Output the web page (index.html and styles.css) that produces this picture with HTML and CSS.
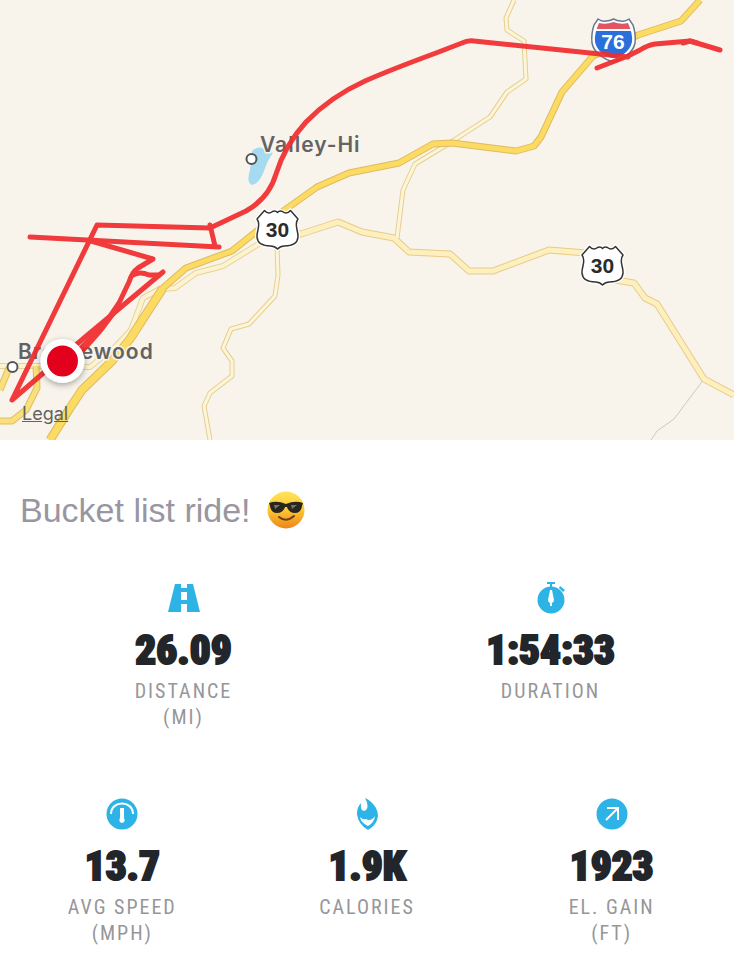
FILE: index.html
```html
<!DOCTYPE html>
<html lang="en">
  <head>
    <meta charset="UTF-8" />
    <meta name="viewport" content="width=device-width, initial-scale=1.0" />
    <title>Bucket list ride!</title>
    <link rel="stylesheet" href="styles.css">
  </head>

  <body>
    <main class="workout">
      <div class="map">
        <svg class="map-canvas" viewBox="0 0 734 440" role="img" aria-label="Route map">
          <defs>
            <!-- US route shield, centred on 0,0 -->
            <g id="us-shield">
              <path d="M-13-19.500Q-9-15-5-18.500Q-2-20 0-17.500Q2-20 5-18.500Q9-15 13-19.500L20.500-11C16-5 21 0 20.500 7C20 14 13 16 7 16Q3 16 0 19Q-3 16-7 16C-13 16-20 14-20.500 7C-21 0-16-5-20.500-11Z" fill="#fff" stroke="#fff" stroke-width="4" />
              <path d="M-13-19.500Q-9-15-5-18.500Q-2-20 0-17.500Q2-20 5-18.500Q9-15 13-19.500L20.500-11C16-5 21 0 20.500 7C20 14 13 16 7 16Q3 16 0 19Q-3 16-7 16C-13 16-20 14-20.500 7C-21 0-16-5-20.500-11Z" fill="#fff" stroke="#333" stroke-width="1.500" stroke-linejoin="round" />
            </g>
            <path id="hwy" d="M50 440L70 408L82 390L113 360L130 339L163 288L186 268L232 251L272 219L317 187L349 173L399 163L433 144L452 143L516 151L534 146L541 137L562 92L593 56L638 35L681 21L700 0" />
            <path id="us30" d="M278 232L301 234L338 222L362 232L394 238L409 252L450 254L469 271L493 271L549 250L586 253L615 280L634 283L645 298L657 304L704 379L734 395" />
            <path id="ramp" d="M0 366L36 366L90 367L116 346L131 330L143 298L160 289L175 288L196 273L223 266L257 245L278 232" />
            <path id="spur" d="M514 0L506 18L507 30L524 41L526 79L507 92L490 117L448 144L415 164L403 190L397 238" />
            <path id="south" d="M277 245L278 275L275 296L249 324L231 329L223 348L232 361L232 376L210 393L204 406L210 440" />
            <path id="loop" d="M9 368L0 390M36 366L37 388L26 410L12 421L0 421" />
            <clipPath id="i-shield-clip"><path d="M599 23Q606 25 613.500 22Q621 25 628 23Q633 34 632 42C630 52 620 57 613.500 58C607 57 597 52 595 42Q594 34 599 23Z" /></clipPath>
            <filter id="pin-shadow" x="-50%" y="-50%" width="200%" height="200%">
              <feDropShadow dx="0" dy="2" stdDeviation="3" flood-opacity="0.35" />
            </filter>
          </defs>

          <rect width="734" height="440" fill="#f8f4ec" />

          <path d="M252 151Q260 144 266 151L273 153Q268 159 264 171Q259 184 252 185Q246 182 250 170Z" fill="#a5daf0" />

          <!-- roads: casing first, then fill -->
          <g class="road">
            <path d="M704 379L674 419L657 431L651 440" stroke="#ccc9c2" stroke-width="1" />
            <use href="#south" stroke="#e5ce91" stroke-width="5" />
            <use href="#spur" stroke="#e5ce91" stroke-width="5" />
            <use href="#ramp" stroke="#e7d299" stroke-width="6" />
            <use href="#us30" stroke="#e8ca8b" stroke-width="7" />
            <use href="#south" stroke="#fdf5d8" stroke-width="3" />
            <use href="#spur" stroke="#fdf5d8" stroke-width="3" />
            <use href="#ramp" stroke="#fdf4cf" stroke-width="4" />
            <use href="#us30" stroke="#fdf0bd" stroke-width="5" />
            <use href="#loop" stroke="#dfbd61" stroke-width="7" />
            <use href="#loop" stroke="#fae07a" stroke-width="5" />
            <use href="#hwy" stroke="#dfba62" stroke-width="7" />
            <path d="M50 440L70 408L82 390L113 360L130 339L163 288" stroke="#dfba62" stroke-width="9" />
            <use href="#hwy" stroke="#fcdb62" stroke-width="5" />
            <path d="M50 440L70 408L82 390L113 360L130 339L163 288" stroke="#fcdb62" stroke-width="7" />
          </g>

          <circle cx="251.500" cy="159" r="5" fill="#fff" stroke="#555" stroke-width="2" />
          <circle cx="12.500" cy="367" r="5" fill="#fff" stroke="#555" stroke-width="2" />
          <text class="place" x="260" y="152">Valley-Hi</text>
          <text class="place" x="18" y="359">Breezewood</text>

          <use href="#us-shield" x="277.500" y="230" />
          <text class="shield-text" x="277.500" y="237">30</text>
          <use href="#us-shield" x="602.500" y="266" />
          <text class="shield-text" x="602.500" y="273">30</text>

          <!-- interstate shield -->
          <path d="M598 19Q602 22 606 21Q610 21 613.500 19Q617 21 621 21Q625 22 629 19L633 25Q636 34 635 43C633 54 621 60 613.500 62C606 60 594 54 592 43Q591 34 594 25Z" fill="#fff" stroke="#667990" stroke-width="1.500" />
          <g clip-path="url(#i-shield-clip)">
            <rect x="588" y="20" width="52" height="9" fill="#e25563" />
            <rect x="588" y="31" width="52" height="32" fill="#2a6fdb" />
          </g>

          <g class="route">
            <path d="M720 50L700 44L690 41L655 44Q648 45 640 50L628 56L597 68" />
            <path d="M683 43L690 41L697 43" />
            <path d="M628 57L600 54L474 41Q468 40 462 43L436 53Q390 70 365 81Q330 97 306 122Q285 145 276 174Q269 198 246 211L210 228L97 225L12 400L84 338L163 272" />
            <path d="M210 225L215 246M219 247L30 237" />
            <path d="M91 241L153 259L138 268Q132 272 129 282L119 303L102 328L80 351" />
            <path d="M133 275Q140 271 149 275L159 275" />
            <path d="M119 306L100 331L76 358" />
            <path d="M104 325L74 355" />
          </g>
          <text class="shield-text interstate" x="613" y="49">76</text>

          <circle cx="62.500" cy="361" r="22" fill="#fff" filter="url(#pin-shadow)" />
          <circle cx="62.500" cy="361" r="15.500" fill="#e2001d" />
        </svg>
        <a class="legal" href="#">Legal</a>
      </div>

      <h1 class="title">
        Bucket list ride!
        <svg class="emoji" viewBox="0 0 38 38" role="img" aria-label="Smiling face with sunglasses">
          <defs>
            <linearGradient id="face" x1="0" y1="0" x2="0" y2="1">
              <stop offset="0" stop-color="#ffe45b" />
              <stop offset="0.500" stop-color="#fdc733" />
              <stop offset="1" stop-color="#ee8419" />
            </linearGradient>
          </defs>
          <circle cx="19" cy="19" r="18.500" fill="url(#face)" />
          <path d="M2 12Q10 9 19 13Q28 9 36 12L35 15Q34 22 28 22Q22 22 20 16H18Q16 22 10 22Q4 22 3 15Z" fill="#29251f" />
          <path d="M7 14L13 14L8 18ZM24 14L30 14L25 18Z" fill="#77736b" />
          <path d="M12 26Q19 32 27 25" fill="none" stroke="#704015" stroke-width="2" stroke-linecap="round" />
        </svg>
      </h1>

      <section class="stats">
        <div class="stats-row">
          <div class="stat">
            <svg class="icon" viewBox="0 0 32 32">
              <path fill-rule="evenodd" d="M7 2H13V6H19V2H25L32 30H19V22H13V30H0ZM13 10V18H19V10Z" />
            </svg>
            <strong class="value">26.09</strong>
            <span class="label">DISTANCE<br />(MI)</span>
          </div>
          <div class="stat">
            <svg class="icon" viewBox="0 0 32 32">
              <path d="M12 0H20V2H17V5H15V2H12ZM25 4L30 8L28 10L24 6Z" />
              <circle cx="16" cy="18" r="13.500" />
              <path class="cut" d="M15 8H17L19 18Q19 20 17 21V24H15V21Q13 20 13 18Z" />
            </svg>
            <strong class="value">1:54:33</strong>
            <span class="label">DURATION</span>
          </div>
        </div>

        <div class="stats-row">
          <div class="stat">
            <svg class="icon" viewBox="0 0 32 32">
              <circle cx="16" cy="16" r="15.500" />
              <path class="line" d="M5 16C5 2 27 2 27 16" />
              <path class="cut" d="M14 10H18V20Q20 24 16 25Q12 24 14 20Z" />
            </svg>
            <strong class="value">13.7</strong>
            <span class="label">AVG SPEED<br />(MPH)</span>
          </div>
          <div class="stat">
            <svg class="icon" viewBox="0 0 32 32">
              <path d="M14 0C21 3 27 10 27 18Q26 27 17 32Q7 26 6 16Q6 9 10 5Q9 12 13 13C18 12 17 5 14 0Z" />
              <path class="cut" d="M9 19Q12 22 15 21Q20 24 24 18Q23 25 17 28Q10 25 9 19Z" />
            </svg>
            <strong class="value">1.9K</strong>
            <span class="label">CALORIES</span>
          </div>
          <div class="stat">
            <svg class="icon" viewBox="0 0 32 32">
              <circle cx="16" cy="16" r="15.500" />
              <path class="line" d="M10 22L22 10M11 10H22V22" />
            </svg>
            <strong class="value">1923</strong>
            <span class="label">EL. GAIN<br />(FT)</span>
          </div>
        </div>
      </section>
    </main>
  </body>
</html>
```
FILE: styles.css
```css
* {
  margin: 0;
  padding: 0;
  box-sizing: border-box;
}

body {
  font-family: "Liberation Sans", Arial, sans-serif;
  background-color: #fff;
}

.map {
  position: relative;
}

.map-canvas {
  display: block;
  width: 100%;
}

.road,
.route {
  fill: none;
  stroke-linejoin: round;
}

.route {
  stroke: #f12c2e;
  stroke-width: 5px;
  stroke-linecap: round;
  opacity: 0.93;
}

.place {
  font-family: Inter, sans-serif;
  font-size: 21px;
  font-weight: 600;
  letter-spacing: 1px;
  fill: #636363;
  stroke: #f8f4ec;
  stroke-width: 3px;
  paint-order: stroke;
}

.shield-text {
  font-size: 21px;
  font-weight: bold;
  text-anchor: middle;
  fill: #2b2b2b;
}

.interstate {
  fill: #fff;
}

.legal {
  position: absolute;
  left: 22px;
  bottom: 15px;
  font-family: Inter, sans-serif;
  font-size: 18px;
  line-height: 22px;
  color: #626262;
}

.title {
  display: flex;
  align-items: center;
  gap: 16px;
  padding: 50px 20px 52px;
  font-size: 34px;
  font-weight: normal;
  line-height: 40px;
  color: #9896a1;
}

.emoji {
  width: 38px;
  height: 38px;
}

.stats {
  display: grid;
  gap: 68px;
  padding-bottom: 14px;
}

.stats-row {
  display: grid;
  grid-auto-flow: column;
  grid-auto-columns: 1fr;
}

.stat {
  display: flex;
  flex-direction: column;
  align-items: center;
  text-align: center;
}

.icon {
  width: 32px;
  height: 32px;
  fill: #2eb3e6;
}

.icon .cut {
  fill: #fff;
}

.icon .line {
  fill: none;
  stroke: #fff;
  stroke-width: 2px;
}

.value {
  margin: 16px 0 8px;
  font-family: "Roboto Condensed", Roboto, sans-serif;
  font-size: 41px;
  font-weight: 900;
  line-height: 40px;
  color: #22252a;
  -webkit-text-stroke: 2px #22252a;
}

.label {
  font-family: "Roboto Condensed", Roboto, sans-serif;
  font-size: 20px;
  line-height: 26px;
  letter-spacing: 2px;
  color: #969699;
}
```
